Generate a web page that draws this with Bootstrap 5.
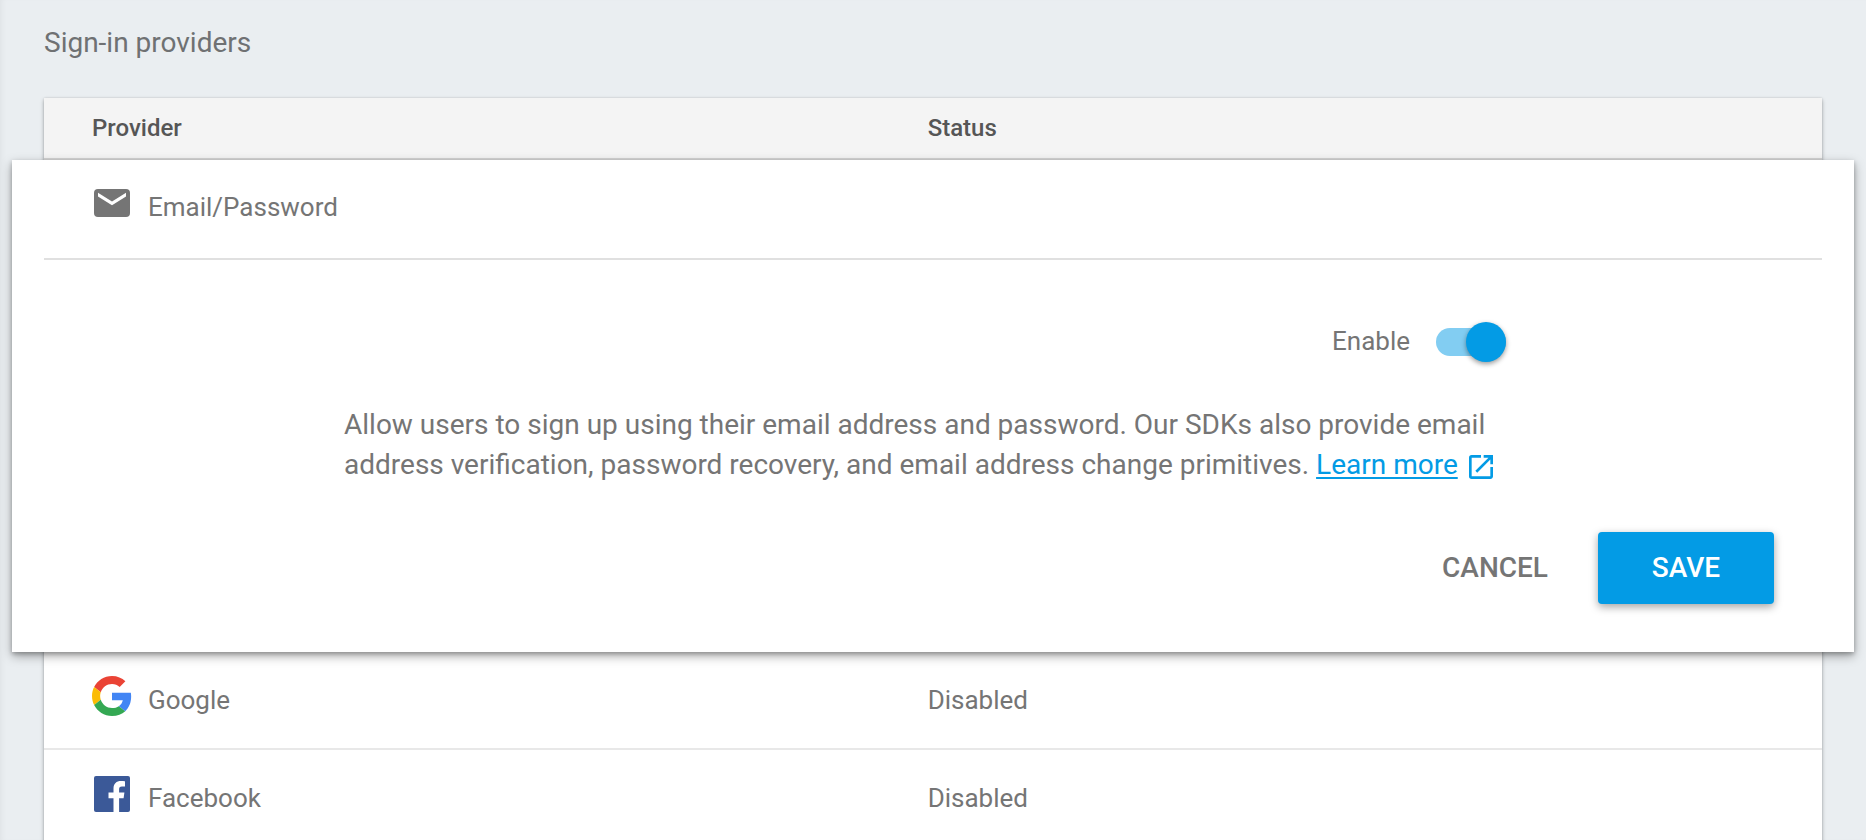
<!DOCTYPE html>
<html lang="en">
<head>
<meta charset="utf-8">
<meta name="viewport" content="width=device-width, initial-scale=1">
<title>Sign-in providers</title>
<link href="https://cdn.jsdelivr.net/npm/bootstrap@5.3.0/dist/css/bootstrap.min.css" rel="stylesheet">
<style>
  body {
    font-family: Roboto, "Liberation Sans", sans-serif;
    font-size: 26px;
    line-height: 32px;
    color: #757575;
    background: #eaeef1;
    box-shadow: inset 5px 0 6px -4px rgba(0, 0, 0, .06);
  }
  .page-body { padding: 0 44px; }
  .page-title { font-size: 28px; line-height: 40px; padding: 23px 0 35px; color: #6f7173; }
  .provider-table {
    table-layout: fixed;
    border-collapse: separate;
    border-spacing: 0;
    background: #fff;
    box-shadow: 0 2px 4px rgba(0, 0, 0, .3), 0 0 2px rgba(0, 0, 0, .12);
  }
  .provider-table th {
    height: 62px;
    padding: 0 0 0 48px;
    font-size: 24px;
    font-weight: 500;
    color: #565656;
    background: #f4f4f4;
    border-bottom: 2px solid #d4d4d4;
  }
  .provider-col { width: 47%; }
  .provider-cell, .status-cell { height: 98px; padding: 0 0 0 48px; border-bottom: 2px solid #e8e8e8; }
  .provider-icon { width: 40px; height: 40px; margin-bottom: 8px; }
  .panel-cell { padding: 0; }
  .edit-panel {
    margin: 0 -32px;
    padding: 0 32px 48px;
    background: #fff;
    box-shadow: 0 4px 10px rgba(0, 0, 0, .34), 0 2px 4px rgba(0, 0, 0, .22);
  }
  .panel-head { height: 100px; padding: 0 0 4px 48px; border-bottom: 2px solid #e0e0e0; }
  .panel-content { width: 1178px; max-width: 100%; padding-top: 62px; }
  .panel-text { font-size: 28px; line-height: 40px; padding-top: 43px; }
  .learn-link { color: #039be5; text-decoration-thickness: 2px; text-underline-offset: 3px; }
  .open-icon { width: 32px; height: 32px; }
  .enable-row { gap: 26px; padding-right: 16px; height: 40px; }
  .enable-row label { padding-bottom: 2px; }
  .toggle-input {
    appearance: none;
    width: 70px;
    height: 28px;
    margin: 0;
    border-radius: 14px;
    background: #d0d0d0;
    display: flex;
    align-items: center;
  }
  .toggle-input::before {
    content: "";
    flex: none;
    width: 40px;
    height: 40px;
    border-radius: 50%;
    background: #fafafa;
    box-shadow: 0 2px 5px rgba(0, 0, 0, .4);
  }
  .toggle-input:checked { background: #82cdf2; justify-content: flex-end; }
  .toggle-input:checked::before { background: #039be5; }
  .panel-actions { padding: 47px 48px 0 0; gap: 16px; }
  .action-btn { height: 72px; padding: 0 34px; font-size: 28px; font-weight: 500; line-height: 40px; border: 0; border-radius: 4px; color: #757575; }
  .save-btn { width: 176px; color: #fff; background: #039be5; box-shadow: 0 3px 8px rgba(0, 0, 0, .36); }
  .save-btn:hover { color: #fff; background: #0288d1; }
</style>
</head>
<body class="vh-100 overflow-hidden">
<main class="page-body">
  <h1 class="page-title m-0 fw-normal">Sign-in providers</h1>
  <table class="provider-table w-100">
    <thead>
      <tr>
        <th class="provider-col" scope="col">Provider</th>
        <th scope="col">Status</th>
      </tr>
    </thead>
    <tbody>
      <tr>
        <td class="panel-cell" colspan="2">
          <div class="edit-panel position-relative">
            <div class="panel-head d-flex align-items-center gap-3">
              <svg class="provider-icon" viewBox="0 0 40 40" aria-hidden="true"><rect x="2" y="6" width="36" height="28" rx="4" fill="#757575"/><path d="M6 9.700 20 18.500 34 9.700v3.800L20 22.300 6 13.500z" fill="#fff"/></svg>
              <span>Email/Password</span>
            </div>
            <div class="panel-content mx-auto">
              <div class="enable-row d-flex align-items-center justify-content-end">
                <label for="enable">Enable</label>
                <input class="toggle-input" type="checkbox" role="switch" id="enable" checked>
              </div>
              <p class="panel-text m-0">Allow users to sign up using their email address and password. Our SDKs also provide email address verification, password recovery, and email address change primitives. <a class="learn-link" href="#">Learn more</a> <svg class="open-icon" viewBox="0 0 24 24" fill="#039be5" aria-hidden="true"><path d="M19 19H5V5h7V3H5a2 2 0 0 0-2 2v14a2 2 0 0 0 2 2h14c1.100 0 2-.9 2-2v-7h-2v7zM14 3v2h3.590l-9.830 9.830 1.410 1.410L19 6.410V10h2V3h-7z"/></svg></p>
            </div>
            <div class="panel-actions d-flex justify-content-end">
              <button class="btn action-btn" type="button">CANCEL</button>
              <button class="btn action-btn save-btn" type="button">SAVE</button>
            </div>
          </div>
        </td>
      </tr>
      <tr>
        <td class="provider-cell">
          <div class="d-flex align-items-center gap-3">
            <svg class="provider-icon" viewBox="0 0 48 48" aria-hidden="true"><path fill="#EA4335" d="M24 9.500c3.540 0 6.710 1.220 9.210 3.600l6.850-6.850C35.900 2.380 30.470 0 24 0 14.620 0 6.510 5.380 2.560 13.220l7.980 6.190C12.430 13.720 17.740 9.500 24 9.500z"/><path fill="#4285F4" d="M46.980 24.550c0-1.570-.15-3.090-.38-4.550H24v9.020h12.940c-.58 2.960-2.260 5.480-4.780 7.180l7.730 6c4.510-4.180 7.090-10.360 7.090-17.650z"/><path fill="#FBBC05" d="M10.530 28.590c-.48-1.450-.76-2.990-.76-4.590s.27-3.140.76-4.590l-7.980-6.190C.92 16.460 0 20.120 0 24c0 3.880.92 7.540 2.560 10.780l7.970-6.190z"/><path fill="#34A853" d="M24 48c6.480 0 11.930-2.130 15.890-5.810l-7.730-6c-2.150 1.450-4.920 2.300-8.160 2.300-6.260 0-11.570-4.220-13.470-9.910l-7.980 6.190C6.510 42.620 14.620 48 24 48z"/></svg>
            <span>Google</span>
          </div>
        </td>
        <td class="status-cell">Disabled</td>
      </tr>
      <tr>
        <td class="provider-cell">
          <div class="d-flex align-items-center gap-3">
            <svg class="provider-icon" viewBox="0 0 40 40" aria-hidden="true"><rect x="2" y="2" width="36" height="36" rx="2" fill="#3b5998"/><path fill="#fff" d="M21.500 38V24.200H16.500V18.600h5v-4.100c0-4.900 3-7.500 7.400-7.500 1.600 0 3.300.1 4.100.2v5.200h-3c-2.400 0-2.900 1.100-2.900 2.800v3.400h5.300l-.8 5.600h-4.500V38z"/></svg>
            <span>Facebook</span>
          </div>
        </td>
        <td class="status-cell">Disabled</td>
      </tr>
    </tbody>
  </table>
</main>
<script src="https://cdn.jsdelivr.net/npm/bootstrap@5.3.0/dist/js/bootstrap.bundle.min.js"></script>
</body>
</html>
